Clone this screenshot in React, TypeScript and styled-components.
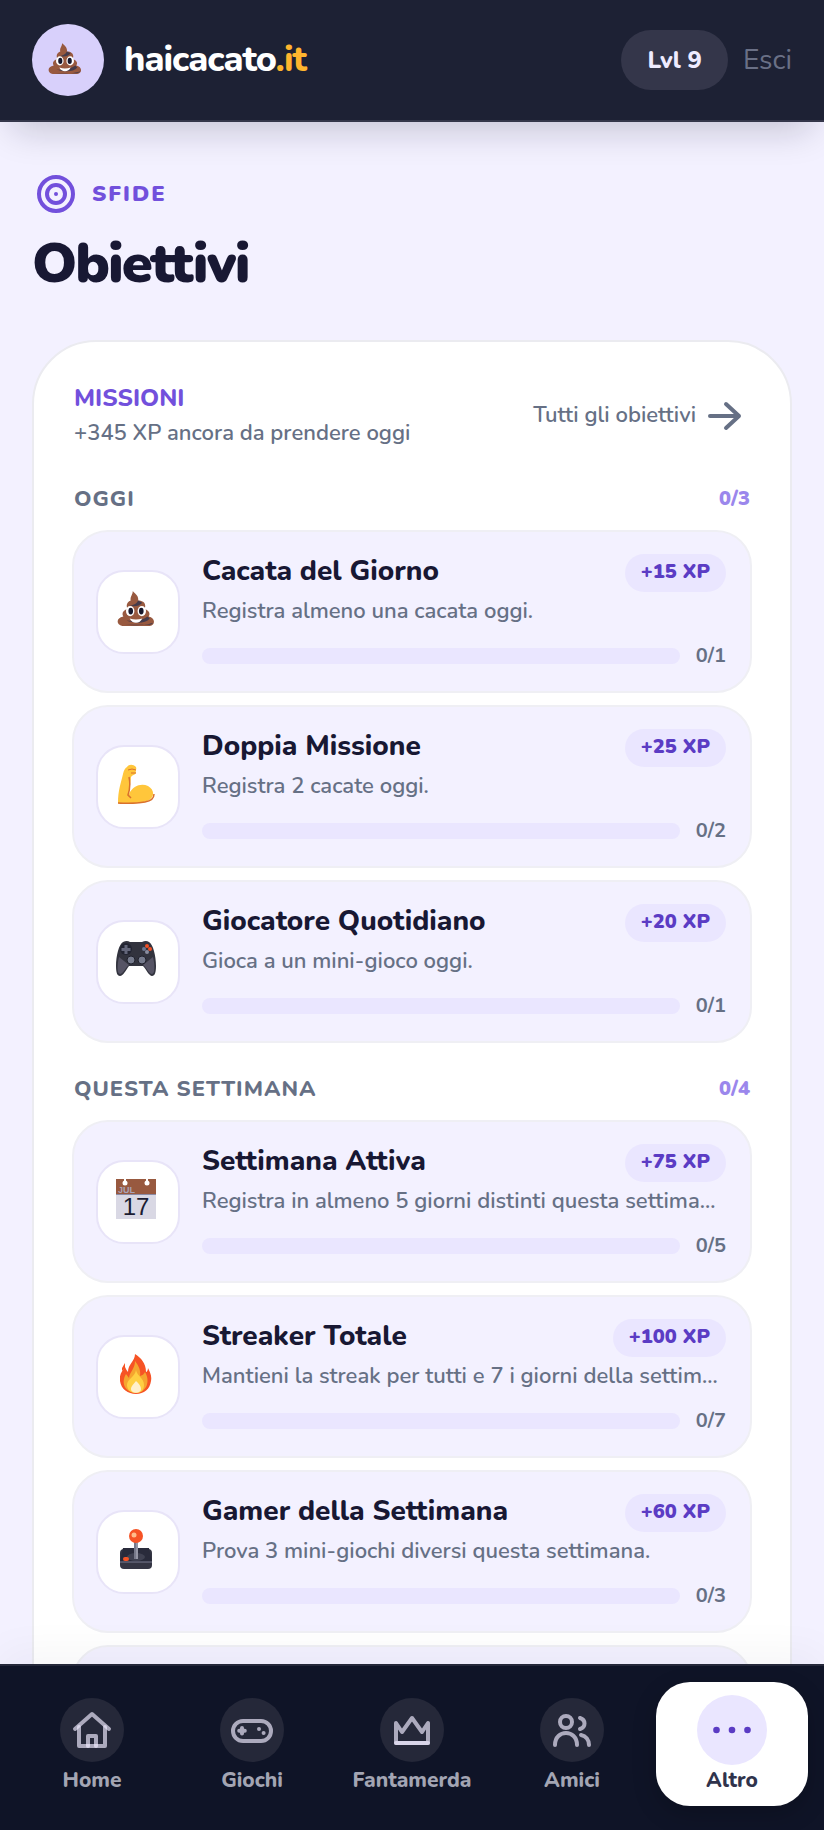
import type { ReactNode } from 'react';
import styled, { createGlobalStyle, css } from 'styled-components';

const colors = {
  page: '#f3f1ff',
  ink: '#181833',
  muted: '#667085',
  purple: '#7250dc',
  purpleDark: '#5b3cc4',
  purpleLight: '#9b87ec',
  lilac: '#eae6ff',
  header: '#1d2134',
  nav: '#0f1427',
};

const GlobalStyle = createGlobalStyle`
  * {
    box-sizing: border-box;
  }
  body {
    margin: 0;
    background: ${colors.page};
    color: ${colors.ink};
    font-family: Nunito, Lato, 'Open Sans', sans-serif;
  }
  h1, h2, h3, p, ul {
    margin: 0;
    padding: 0;
  }
  a {
    color: inherit;
    text-decoration: none;
  }
  button {
    font-family: inherit;
    border: 0;
    cursor: pointer;
  }
`;

const Shell = styled.div`
  display: flex;
  flex-direction: column;
  height: 100vh;
`;

const Header = styled.header`
  display: flex;
  align-items: center;
  justify-content: space-between;
  flex-shrink: 0;
  padding: 24px 32px;
  background: ${colors.header};
  border-bottom: 2px solid #34364a;
  box-shadow: 0 20px 36px -12px rgba(15, 15, 40, 0.2);
  z-index: 1;
`;

const Brand = styled.a`
  display: flex;
  align-items: center;
  gap: 20px;
  color: #fff;
  font-size: 36px;
  font-weight: 800;
  line-height: 48px;
  letter-spacing: -1px;
`;

const BrandLogo = styled.span`
  display: grid;
  place-items: center;
  width: 72px;
  height: 72px;
  padding: 0 6px 2px 0;
  border-radius: 50%;
  background: #d8d0fb;
`;

const BrandTld = styled.span`
  color: #ffb52e;
`;

const Account = styled.div`
  display: flex;
  align-items: center;
  gap: 15px;
`;

const LevelPill = styled.span`
  padding: 14px 26px;
  border-radius: 30px;
  background: #34364a;
  color: #eeebff;
  font-size: 24px;
  font-weight: 800;
  line-height: 32px;
`;

const LogoutButton = styled.button`
  padding: 0;
  background: none;
  color: #6a7086;
  font-size: 28px;
  line-height: 36px;
`;

const Main = styled.main`
  flex: 1;
  min-height: 0;
  overflow: auto;
  scrollbar-width: none;
  padding: 48px 32px;
`;

const Kicker = styled.p`
  display: flex;
  align-items: center;
  gap: 12px;
  color: ${colors.purple};
  font-size: 22px;
  font-weight: 900;
  line-height: 32px;
  letter-spacing: 2px;
`;

const PageTitle = styled.h1`
  padding: 6px 0 36px;
  font-size: 56px;
  font-weight: 900;
  line-height: 80px;
  letter-spacing: -2px;
`;

const Panel = styled.section`
  padding: 38px 38px 36px;
  border: 2px solid #ebebf0;
  border-radius: 64px;
  background: #fff;
`;

const PanelHeader = styled.div`
  display: flex;
  align-items: center;
  justify-content: space-between;
  padding: 0 10px 3px 2px;
`;

const PanelTitle = styled.h2`
  color: ${colors.purple};
  font-size: 24px;
  font-weight: 800;
  line-height: 36px;
`;

const PanelText = styled.p`
  color: ${colors.muted};
  font-size: 22px;
  font-weight: 600;
  line-height: 34px;
`;

const AllLink = styled.a`
  display: flex;
  align-items: center;
  gap: 10px;
  color: ${colors.muted};
  font-size: 22px;
  font-weight: 600;
`;

const GroupHeader = styled.div`
  display: flex;
  align-items: center;
  justify-content: space-between;
  padding: 30px 2px 15px;
  line-height: 32px;
`;

const GroupTitle = styled.h3`
  color: ${colors.muted};
  font-size: 22px;
  font-weight: 800;
  letter-spacing: 1px;
`;

const GroupCount = styled.span`
  color: ${colors.purpleLight};
  font-size: 20px;
  font-weight: 900;
`;

const MissionList = styled.ul`
  display: grid;
  grid-template-columns: minmax(0, 1fr);
  gap: 12px;
  list-style: none;
`;

const MissionCard = styled.li`
  display: flex;
  align-items: center;
  gap: 22px;
  min-height: 163px;
  padding: 22px 24px 21px 22px;
  border: 2px solid #efeff4;
  border-radius: 36px;
  background: ${colors.page};
`;

const MissionIcon = styled.div`
  display: grid;
  place-items: center;
  flex-shrink: 0;
  width: 84px;
  height: 84px;
  padding: 0 4px 6px 0;
  border: 2px solid #e8e4f8;
  border-radius: 28px;
  background: #fff;
`;

const MissionBody = styled.div`
  flex: 1;
  min-width: 0;
`;

const MissionTop = styled.div`
  display: flex;
  justify-content: space-between;
`;

const MissionTitle = styled.h3`
  font-size: 28px;
  font-weight: 800;
  line-height: 34px;
`;

const XpBadge = styled.span`
  height: 38px;
  padding: 0 16px;
  border-radius: 19px;
  background: ${colors.lilac};
  color: ${colors.purpleDark};
  font-size: 20px;
  font-weight: 900;
  line-height: 36px;
`;

const MissionText = styled.p`
  padding: 3px 0 15px;
  overflow: hidden;
  color: ${colors.muted};
  font-size: 22px;
  font-weight: 600;
  line-height: 32px;
  text-overflow: ellipsis;
  white-space: nowrap;
`;

const ProgressRow = styled.div`
  display: flex;
  align-items: center;
  gap: 16px;
  color: ${colors.muted};
  font-size: 20px;
  font-weight: 700;
  line-height: 28px;
`;

const Track = styled.div`
  flex: 1;
  height: 16px;
  border-radius: 8px;
  background: ${colors.lilac};
  overflow: hidden;
`;

const TrackFill = styled.div`
  height: 100%;
  background: ${colors.purple};
`;

const BottomNav = styled.nav`
  display: grid;
  grid-template-columns: repeat(5, 1fr);
  gap: 8px;
  flex-shrink: 0;
  padding: 16px 16px 24px;
  border-top: 2px solid #25283a;
  background: ${colors.nav};
  box-shadow: 0 -12px 40px rgba(15, 15, 40, 0.04);
  z-index: 1;
`;

const NavIcon = styled.span<{ $active?: boolean }>`
  display: grid;
  place-items: center;
  width: 64px;
  height: 64px;
  border-radius: 50%;
  background: #252839;
  ${({ $active }) =>
    $active &&
    css`
      width: 70px;
      height: 70px;
      margin: -3px;
      background: ${colors.lilac};
    `}
`;

const NavItem = styled.a<{ $active?: boolean }>`
  display: flex;
  flex-direction: column;
  align-items: center;
  gap: 5px;
  height: 124px;
  padding-top: 16px;
  border-radius: 34px;
  color: #a3a5b3;
  font-size: 21px;
  font-weight: 800;
  line-height: 26px;
  ${({ $active }) =>
    $active &&
    css`
      background: #fff;
      color: #30334c;
      box-shadow: 0 8px 24px rgba(0, 0, 0, 0.2);
    `}
`;

const Poop = ({ size }: { size: number }) => (
  <svg width={size} height={size} viewBox="0 0 36 36" aria-hidden="true">
    <path
      d="M15 1c1 2 6 4 5 9 6 0 8 4 6 8 4 1 6 4 4 7 6 1 7 8 1 9H5c-6-1-6-8 1-9-2-3 0-6 4-7-2-4 0-7 3-8-1-4 2-5 2-9z"
      fill="#98593f"
    />
    <path
      d="M20 10c-1 3-4 4-8 5 6 1 9 0 12-3M29 25c-5 4-13 5-20 4 8 3 18 3 22-2M34 31c-4 2-16 3-26 2h22c2 0 4-1 4-2z"
      fill="#443b4b"
    />
    <ellipse cx="12.500" cy="20" rx="4" ry="4.800" fill="#fff" />
    <ellipse cx="23.500" cy="20" rx="4" ry="4.800" fill="#fff" />
    <ellipse cx="13" cy="20" rx="2.200" ry="3.200" fill="#17172b" />
    <ellipse cx="23" cy="20" rx="2.200" ry="3.200" fill="#17172b" />
    <path d="M12 27q6 2 12 0-2 4-6 4t-6-4z" fill="#fff" />
  </svg>
);

const Muscle = () => (
  <svg width="40" height="40" viewBox="0 0 40 40" aria-hidden="true">
    <path
      d="M11 3c2-3 6-3 9 0 1 2-1 4 0 6-1 2-4 2-5 4l-2 17c4-9 13-11 19-8 7 4 7 12-1 15-9 3-18 3-29 2 0-13 3-20 5-29 1-4 2-6 4-7z"
      fill="#ffc63b"
    />
    <path
      d="M13 13q2 9-1 18l3 3M2 39q16 1 27-1c6-1 9-4 9-8"
      fill="none"
      stroke="#d9702c"
      strokeWidth="1.500"
    />
    <path d="M12 6q4-2 8 0M15 9l5 0" stroke="#d9702c" fill="none" />
  </svg>
);

const Gamepad = () => (
  <svg width="42" height="36" viewBox="0 0 42 36" aria-hidden="true">
    <path
      d="M8 1q4-2 7 0h12q4-2 7 0c4 2 7 14 7 24 0 6-1 10-4 10s-6-7-9-10H14c-3 4-6 10-9 10s-4-4-4-10C1 15 4 3 8 1z"
      fill="#32333e"
    />
    <path d="M4 16 14 24c-4 3-6 9-9 9s-3-9-1-17zM38 16 28 24c4 3 6 9 9 9s3-9 1-17z" fill="#565465" />
    <circle cx="11" cy="8" r="6" fill="#222432" />
    <path d="M9.500 4h3v3h3v3h-3v3h-3v-3h-3V7h3z" fill="#63667a" />
    <circle cx="32" cy="5" r="2" fill="#f05025" />
    <circle cx="35" cy="8" r="2" fill="#f05025" />
    <circle cx="29" cy="8" r="2" fill="#6c7891" />
    <circle cx="32" cy="11" r="2" fill="#8a8da0" />
    <circle cx="16" cy="19" r="4" fill="#767b8d" stroke="#20212d" />
    <circle cx="27" cy="19" r="4" fill="#767b8d" stroke="#20212d" />
  </svg>
);

const CalendarText = styled.text`
  font-family: 'Liberation Sans', Arial, sans-serif;
`;

const Calendar = () => (
  <svg width="40" height="40" viewBox="0 0 40 40" aria-hidden="true">
    <path d="M0 0h40v40H0z" fill="#d9d8e4" />
    <path d="M0 0h40v15H0z" fill="#98593f" />
    <path d="M0 15.500h40" stroke="#8b8ba5" />
    <path d="M9 0v4M31 0v4" stroke="#fff" strokeWidth="2" />
    <circle cx="9" cy="4" r="2.500" fill="#fff" />
    <circle cx="31" cy="4" r="2.500" fill="#fff" />
    <CalendarText x="2" y="13.500" fontSize="9" fontWeight="700" fill="#aaa3b8">
      JUL
    </CalendarText>
    <CalendarText x="20" y="36" fontSize="24" textAnchor="middle" fill="#1b1c32">
      17
    </CalendarText>
  </svg>
);

const Flame = () => (
  <svg width="32" height="40" viewBox="0 0 32 40" aria-hidden="true">
    <path
      d="M15 0c6 4 11 9 11 18 1 0 2-2 2-4 2 4 4 8 3 13-1 8-7 13-15 13S1 35 0 27c-1-6 2-10 5-14 1 2 2 4 3 5 0-8 7-11 7-18z"
      fill="#f65325"
    />
    <path
      d="M15 7c4 5 6 10 5 15 3-1 4-2 5-4 5 8 3 20-9 21C4 38 1 28 6 20l3 4c1-7 6-9 6-17z"
      fill="#f5a52f"
    />
    <path d="M16 16c1 6 8 8 8 15 0 5-3 8-8 8s-9-3-9-8c0-6 8-8 9-15z" fill="#ffcf42" />
    <path d="M16 27c3 3 5 5 5 8 0 5-10 5-10 0 0-3 3-5 5-8z" fill="#fff0cb" />
    <path d="M2 14l3-5v5l-3 3z" fill="#f65325" />
  </svg>
);

const Joystick = () => (
  <svg width="32" height="40" viewBox="0 0 32 40" aria-hidden="true">
    <rect y="20" width="32" height="20" rx="4" fill="#343543" />
    <path d="M3 19h26l3 14H0z" fill="#292b3b" />
    <path d="M0 33h32" stroke="#7b7d92" />
    <ellipse cx="16" cy="28" rx="9" ry="4" fill="#3f4151" />
    <path d="M14 12h4v18h-4z" fill="#767889" />
    <path d="M17 12v18" stroke="#b3b4c2" />
    <circle cx="16" cy="7" r="7" fill="#f65325" />
    <circle cx="14" cy="6" r="2.500" fill="#ffbd8b" />
    <rect x="3" y="28" width="6" height="4" rx="2" fill="#f65325" />
  </svg>
);

const TargetIcon = () => (
  <svg width="48" height="48" viewBox="0 0 48 48" fill="none" stroke="currentColor" strokeWidth="4" aria-hidden="true">
    <circle cx="24" cy="24" r="17" />
    <circle cx="24" cy="24" r="9" />
    <circle cx="24" cy="24" r="2" fill="currentColor" stroke="none" />
  </svg>
);

const ArrowIcon = () => (
  <svg
    width="36"
    height="32"
    viewBox="0 0 36 32"
    fill="none"
    stroke="currentColor"
    strokeWidth="4"
    strokeLinecap="round"
    strokeLinejoin="round"
    aria-hidden="true"
  >
    <path d="M4 17h29M20 5l13 12-13 12" />
  </svg>
);

const NavSvg = ({ children }: { children: ReactNode }) => (
  <svg
    width="64"
    height="64"
    viewBox="0 0 64 64"
    fill="none"
    stroke="#eeeaff"
    strokeOpacity="0.67"
    strokeWidth="4"
    strokeLinecap="round"
    strokeLinejoin="round"
    aria-hidden="true"
  >
    {children}
  </svg>
);

const HomeIcon = () => (
  <NavSvg>
    <path d="M15 31 32 16l17 15" />
    <path d="M19 29v19h26V29" />
    <path d="M28 48V38h8v10" />
  </NavSvg>
);

const GamesIcon = () => (
  <NavSvg>
    <rect x="13" y="23" width="38" height="20" rx="10" />
    <path d="M22 30v5.500M19.200 32.700h5.600" />
    <path d="M39 31h.01M43.600 35h.01" />
  </NavSvg>
);

const CrownIcon = () => (
  <NavSvg>
    <path d="M16 45V25l6 9 10-14 10 14 6-9v20z" />
    <path d="M16 45h32" />
  </NavSvg>
);

const FriendsIcon = () => (
  <NavSvg>
    <circle cx="26" cy="24" r="6" />
    <path d="M15 47c0-16 22-16 22 0" />
    <path d="M40 20c6 2 6 9 0 11" />
    <path d="M41 37c5 1 8 5 8 10" />
  </NavSvg>
);

const MoreIcon = () => (
  <svg width="40" height="8" viewBox="0 0 40 8" fill={colors.purpleDark} aria-hidden="true">
    <circle cx="4.500" cy="4" r="3.300" />
    <circle cx="20" cy="4" r="3.300" />
    <circle cx="35.500" cy="4" r="3.300" />
  </svg>
);

type Mission = {
  title: string;
  text: string;
  xp: number;
  goal: number;
  icon: ReactNode;
};

const daily: Mission[] = [
  { title: 'Cacata del Giorno', text: 'Registra almeno una cacata oggi.', xp: 15, goal: 1, icon: <Poop size={38} /> },
  { title: 'Doppia Missione', text: 'Registra 2 cacate oggi.', xp: 25, goal: 2, icon: <Muscle /> },
  { title: 'Giocatore Quotidiano', text: 'Gioca a un mini-gioco oggi.', xp: 20, goal: 1, icon: <Gamepad /> },
];

const weekly: Mission[] = [
  {
    title: 'Settimana Attiva',
    text: 'Registra in almeno 5 giorni distinti questa settimana.',
    xp: 75,
    goal: 5,
    icon: <Calendar />,
  },
  {
    title: 'Streaker Totale',
    text: 'Mantieni la streak per tutti e 7 i giorni della settimana.',
    xp: 100,
    goal: 7,
    icon: <Flame />,
  },
  {
    title: 'Gamer della Settimana',
    text: 'Prova 3 mini-giochi diversi questa settimana.',
    xp: 60,
    goal: 3,
    icon: <Joystick />,
  },
];

const navItems = [
  { label: 'Home', icon: <HomeIcon /> },
  { label: 'Giochi', icon: <GamesIcon /> },
  { label: 'Fantamerda', icon: <CrownIcon /> },
  { label: 'Amici', icon: <FriendsIcon /> },
  { label: 'Altro', icon: <MoreIcon />, active: true },
];

const MissionRow = ({ mission, done = 0 }: { mission: Mission; done?: number }) => (
  <MissionCard>
    <MissionIcon>{mission.icon}</MissionIcon>
    <MissionBody>
      <MissionTop>
        <MissionTitle>{mission.title}</MissionTitle>
        <XpBadge>+{mission.xp} XP</XpBadge>
      </MissionTop>
      <MissionText>{mission.text}</MissionText>
      <ProgressRow>
        <Track>
          <TrackFill style={{ width: `${(done / mission.goal) * 100}%` }} />
        </Track>
        <span>
          {done}/{mission.goal}
        </span>
      </ProgressRow>
    </MissionBody>
  </MissionCard>
);

const App = () => {
  return (
    <>
      <GlobalStyle />
      <Shell>
        <Header>
          <Brand href="#">
            <BrandLogo>
              <Poop size={34} />
            </BrandLogo>
            <span>
              haicacato<BrandTld>.it</BrandTld>
            </span>
          </Brand>
          <Account>
            <LevelPill>Lvl 9</LevelPill>
            <LogoutButton type="button">Esci</LogoutButton>
          </Account>
        </Header>
        <Main>
          <Kicker>
            <TargetIcon />
            SFIDE
          </Kicker>
          <PageTitle>Obiettivi</PageTitle>
          <Panel>
            <PanelHeader>
              <div>
                <PanelTitle>MISSIONI</PanelTitle>
                <PanelText>+345 XP ancora da prendere oggi</PanelText>
              </div>
              <AllLink href="#">
                Tutti gli obiettivi
                <ArrowIcon />
              </AllLink>
            </PanelHeader>
            <GroupHeader>
              <GroupTitle>OGGI</GroupTitle>
              <GroupCount>0/3</GroupCount>
            </GroupHeader>
            <MissionList>
              {daily.map((mission) => (
                <MissionRow key={mission.title} mission={mission} />
              ))}
            </MissionList>
            <GroupHeader>
              <GroupTitle>QUESTA SETTIMANA</GroupTitle>
              <GroupCount>0/4</GroupCount>
            </GroupHeader>
            <MissionList>
              {weekly.map((mission) => (
                <MissionRow key={mission.title} mission={mission} />
              ))}
              <MissionCard />
            </MissionList>
          </Panel>
        </Main>
        <BottomNav>
          {navItems.map(({ label, icon, active }) => (
            <NavItem key={label} href="#" $active={active}>
              <NavIcon $active={active}>{icon}</NavIcon>
              {label}
            </NavItem>
          ))}
        </BottomNav>
      </Shell>
    </>
  );
};

export default App;
